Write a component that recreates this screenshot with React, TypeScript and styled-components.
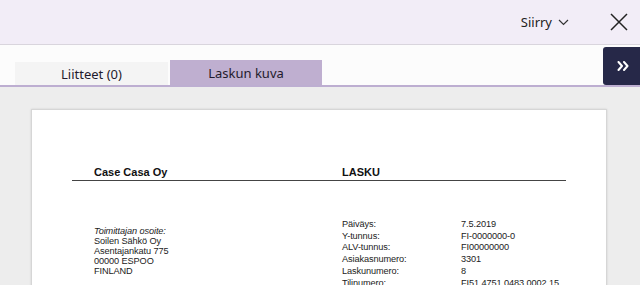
import React from 'react';
import styled, { createGlobalStyle } from 'styled-components';

const GlobalStyle = createGlobalStyle`
  html, body {
    margin: 0;
    padding: 0;
    overflow: hidden;
    background: #ededed;
  }
  body {
    font-family: "Noto Sans", "Open Sans", sans-serif;
  }
`;

const details = [
  ['Päiväys:', '7.5.2019'],
  ['Y-tunnus:', 'FI-0000000-0'],
  ['ALV-tunnus:', 'FI00000000'],
  ['Asiakasnumero:', '3301'],
  ['Laskunumero:', '8'],
  ['Tilinumero:', 'FI51 4751 0483 0002 15'],
];

const address = ['Soilen Sähkö Oy', 'Asentajankatu 775', '00000 ESPOO', 'FINLAND'];

const App: React.FC = () => {
  return (
    <Page>
      <GlobalStyle />
      <Header>
        <GoButton>
          Siirry
          <svg width="11" height="7" viewBox="0 0 11 7" fill="none">
            <path d="M1 1L5.5 5.5L10 1" stroke="#333" strokeWidth="1.2" />
          </svg>
        </GoButton>
        <CloseButton>
          <svg width="18" height="18" viewBox="0 0 18 18" fill="none">
            <path d="M1 1L17 17M17 1L1 17" stroke="#222" strokeWidth="1.5" />
          </svg>
        </CloseButton>
      </Header>
      <TabBar>
        <Tab>Liitteet (0)</Tab>
        <Tab active>Laskun kuva</Tab>
        <ExpandButton>
          <svg width="12" height="10" viewBox="0 0 12 10" fill="none">
            <path d="M1.5 1L5 5L1.5 9M7 1L10.5 5L7 9" stroke="#fff" strokeWidth="2" strokeLinecap="round" strokeLinejoin="round" />
          </svg>
        </ExpandButton>
      </TabBar>
      <Viewer>
        <Paper>
          <DocHead>
            <DocTitle>Case Casa Oy</DocTitle>
            <DocTitle>LASKU</DocTitle>
          </DocHead>
          <DocBody>
            <Address>
              <em>Toimittajan osoite:</em>
              {address.map(line => (
                <span key={line}>{line}</span>
              ))}
            </Address>
            <Details>
              {details.map(([label, value]) => (
                <React.Fragment key={label}>
                  <span>{label}</span>
                  <span>{value}</span>
                </React.Fragment>
              ))}
            </Details>
          </DocBody>
        </Paper>
      </Viewer>
    </Page>
  );
};

export default App;

const Page = styled.div`
  width: 640px;
  height: 285px;
  display: flex;
  flex-direction: column;
  overflow: hidden;
`;

const Header = styled.div`
  height: 44px;
  flex-shrink: 0;
  background: #f2edf7;
  border-bottom: 1px solid #d9d5dd;
  display: flex;
  align-items: center;
  justify-content: flex-end;
  padding-right: 12px;
`;

const GoButton = styled.button`
  background: none;
  border: none;
  display: flex;
  align-items: center;
  gap: 6px;
  font-family: "Noto Sans", sans-serif;
  font-size: 13px;
  color: #222;
  padding: 0;
  margin-right: 41px;
  cursor: pointer;
`;

const CloseButton = styled.button`
  background: none;
  border: none;
  padding: 0;
  display: flex;
  cursor: pointer;
`;

const TabBar = styled.div`
  height: 40px;
  flex-shrink: 0;
  background: #fcfcfc;
  border-bottom: 2px solid #bdaed1;
  display: flex;
  align-items: flex-end;
  gap: 2px;
  padding-left: 15px;
`;

const Tab = styled.div<{ active?: boolean }>`
  width: ${p => (p.active ? 152 : 153)}px;
  height: ${p => (p.active ? 25 : 23)}px;
  background: ${p => (p.active ? '#bfafd0' : '#f4f4f4')};
  color: #1f1b2d;
  font-size: 13px;
  display: flex;
  align-items: center;
  justify-content: center;
`;

const ExpandButton = styled.button`
  margin-left: auto;
  align-self: center;
  margin-top: 2px;
  width: 37px;
  height: 38px;
  border: none;
  border-radius: 3px 0 0 3px;
  background: #262848;
  display: flex;
  align-items: center;
  justify-content: center;
  padding: 0 0 0 2px;
  cursor: pointer;
`;

const Viewer = styled.div`
  flex: 1;
  background: #ededed;
  padding: 22px 0 0 31px;
`;

const Paper = styled.div`
  width: 574px;
  height: 300px;
  background: #fff;
  border: 1px solid #d6d6d6;
  box-shadow: 0 0 2px rgba(0, 0, 0, 0.12);
  padding-top: 56px;
  font-family: "Liberation Sans", Arial, sans-serif;
  color: #111;
`;

const DocHead = styled.div`
  margin: 0 40px;
  padding: 0 22px 1px;
  border-bottom: 1.5px solid #444;
  display: grid;
  grid-template-columns: 248px 1fr;
`;

const DocTitle = styled.div`
  font-weight: bold;
  font-size: 11px;
  line-height: 13px;
`;

const DocBody = styled.div`
  margin: 38px 0 0 62px;
  display: grid;
  grid-template-columns: 248px 1fr;
  font-size: 9.2px;
  letter-spacing: -0.1px;
  color: #222;
`;

const Address = styled.div`
  display: flex;
  flex-direction: column;
  line-height: 10px;
  padding-top: 7px;

  em {
    font-style: italic;
  }
`;

const Details = styled.div`
  display: grid;
  grid-template-columns: 119px 1fr;
  line-height: 11.7px;
`;
